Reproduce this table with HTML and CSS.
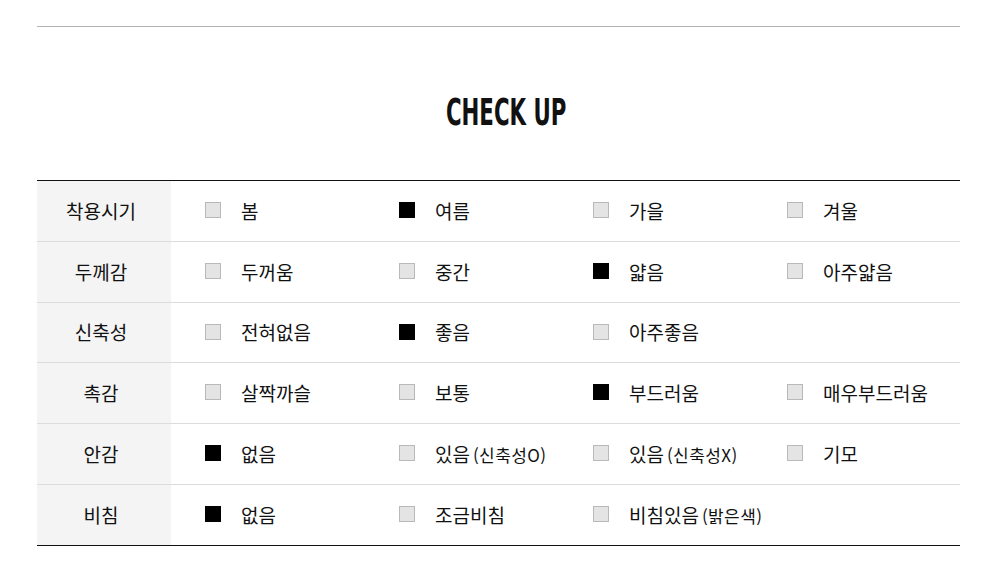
FILE: index.html
```html
<!DOCTYPE html>
<html lang="ko">
<head>
<meta charset="utf-8">
<link rel="stylesheet" href="styles.css">
</head>
<body>
<div class="wrap">
  <div class="topline"></div>
  <h2 class="title"><span class="title-text">CHECK UP</span></h2>
  <div class="table">
    <div class="row">
      <div class="label">착용시기</div>
      <div class="opts">
        <div class="opt"><span class="box"></span><span class="txt">봄</span></div>
        <div class="opt"><span class="box on"></span><span class="txt">여름</span></div>
        <div class="opt"><span class="box"></span><span class="txt">가을</span></div>
        <div class="opt"><span class="box"></span><span class="txt">겨울</span></div>
      </div>
    </div>
    <div class="row">
      <div class="label">두께감</div>
      <div class="opts">
        <div class="opt"><span class="box"></span><span class="txt">두꺼움</span></div>
        <div class="opt"><span class="box"></span><span class="txt">중간</span></div>
        <div class="opt"><span class="box on"></span><span class="txt">얇음</span></div>
        <div class="opt"><span class="box"></span><span class="txt">아주얇음</span></div>
      </div>
    </div>
    <div class="row">
      <div class="label">신축성</div>
      <div class="opts">
        <div class="opt"><span class="box"></span><span class="txt">전혀없음</span></div>
        <div class="opt"><span class="box on"></span><span class="txt">좋음</span></div>
        <div class="opt"><span class="box"></span><span class="txt">아주좋음</span></div>
      </div>
    </div>
    <div class="row">
      <div class="label">촉감</div>
      <div class="opts">
        <div class="opt"><span class="box"></span><span class="txt">살짝까슬</span></div>
        <div class="opt"><span class="box"></span><span class="txt">보통</span></div>
        <div class="opt"><span class="box on"></span><span class="txt">부드러움</span></div>
        <div class="opt"><span class="box"></span><span class="txt">매우부드러움</span></div>
      </div>
    </div>
    <div class="row">
      <div class="label">안감</div>
      <div class="opts">
        <div class="opt"><span class="box on"></span><span class="txt">없음</span></div>
        <div class="opt"><span class="box"></span><span class="txt">있음<small>(신축성O)</small></span></div>
        <div class="opt"><span class="box"></span><span class="txt">있음<small>(신축성X)</small></span></div>
        <div class="opt"><span class="box"></span><span class="txt">기모</span></div>
      </div>
    </div>
    <div class="row">
      <div class="label">비침</div>
      <div class="opts">
        <div class="opt"><span class="box on"></span><span class="txt">없음</span></div>
        <div class="opt"><span class="box"></span><span class="txt">조금비침</span></div>
        <div class="opt"><span class="box"></span><span class="txt">비침있음<small>(밝은색)</small></span></div>
      </div>
    </div>
  </div>
</div>
</body>
</html>
```

FILE: styles.css
```css
html, body {
  margin: 0;
  padding: 0;
  background: #ffffff;
}
body {
  font-family: "Noto Sans CJK KR", "Noto Sans", sans-serif;
  color: #111;
}
.wrap {
  width: 923px;
  margin-left: 37px;
  padding-top: 26px;
}
.topline {
  height: 1px;
  background: #b4b4b4;
}
.title {
  margin: 0;
  height: 153px;
  display: flex;
  align-items: center;
  justify-content: center;
  padding-left: 15px;
  padding-top: 18px;
  box-sizing: border-box;
}
.title-text {
  display: inline-block;
  font-family: "DejaVu Sans Condensed", "Liberation Sans", sans-serif;
  font-weight: 700;
  font-size: 37px;
  line-height: 1;
  color: #111;
  transform: scaleX(0.64);
}
.table {
  border-top: 1px solid #111;
  border-bottom: 1px solid #111;
}
.row {
  display: flex;
  height: 61px;
  box-sizing: border-box;
  border-top: 1px solid #dcdcdc;
}
.row:first-child {
  border-top: none;
  height: 60px;
}
.row:nth-child(3) {
  height: 60px;
}
.label {
  flex: none;
  width: 134px;
  background: #f4f4f4;
  display: flex;
  align-items: center;
  justify-content: center;
  font-size: 19px;
  padding-right: 6px;
  padding-bottom: 2px;
  box-sizing: border-box;
}
.opts {
  display: flex;
  align-items: center;
  padding-left: 34px;
  padding-bottom: 2px;
}
.opt {
  flex: none;
  width: 194px;
  display: flex;
  align-items: center;
}
.box {
  width: 16px;
  height: 16px;
  box-sizing: border-box;
  background: #e4e4e4;
  border: 1px solid #b9b9b9;
  margin-right: 20px;
  flex: none;
}
.box.on {
  background: #000;
  border-color: #000;
}
.txt {
  font-size: 19px;
  line-height: 1;
  white-space: nowrap;
}
.txt small {
  font-size: 17px;
  letter-spacing: 0.4px;
  margin-left: 3px;
}
```
